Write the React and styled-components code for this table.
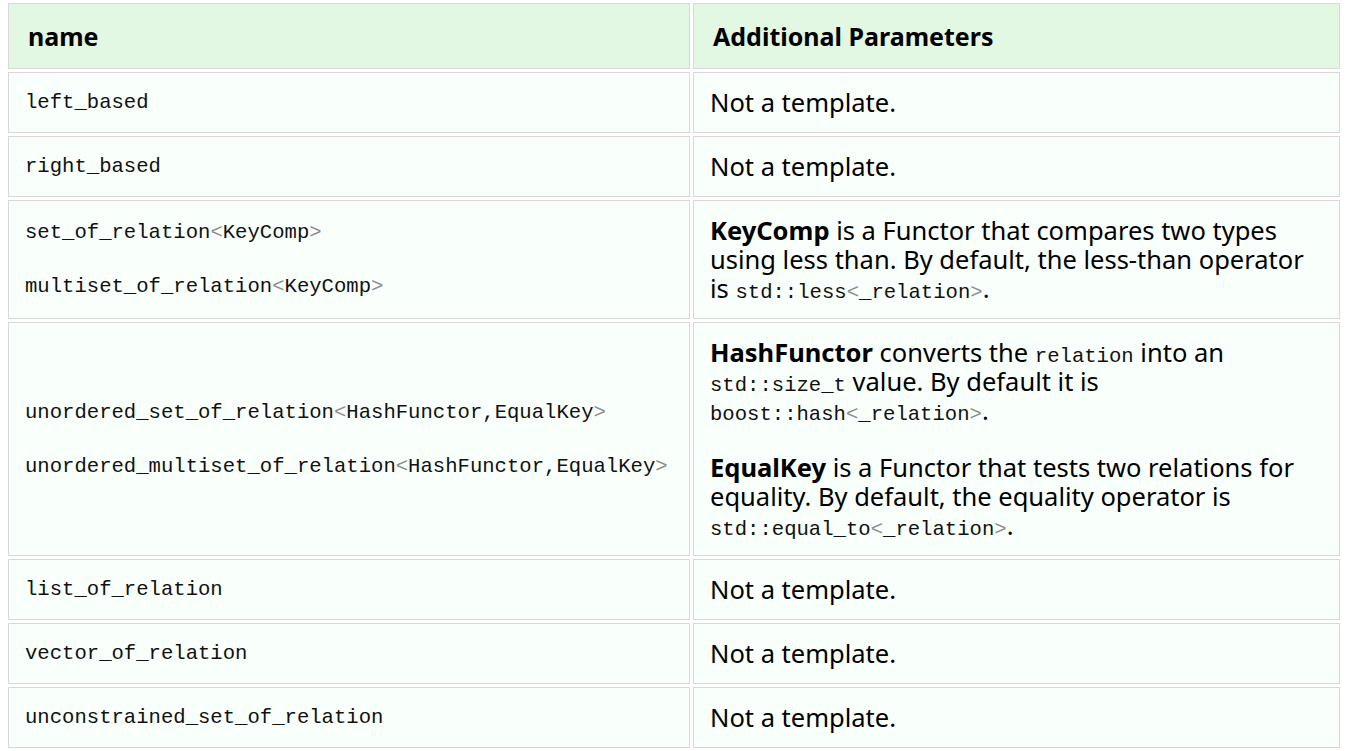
import React from "react";
import styled, { createGlobalStyle } from "styled-components";

const Global = createGlobalStyle`
  html, body { margin: 0; padding: 0; background: #ffffff; }
`;

const Page = styled.div`
  padding: 0 5px;
`;

const Table = styled.table`
  width: 100%;
  table-layout: fixed;
  border-collapse: separate;
  border-spacing: 3px 3px;
  font-family: "Noto Sans", "Open Sans", sans-serif;
  color: #000;
`;

const Th = styled.th`
  background: #e3f8e3;
  border: 1px solid #d8d8d8;
  text-align: left;
  font-weight: 700;
  font-size: 25px;
  line-height: 30px;
  padding: 17px 19px;
`;

const Td = styled.td`
  background: #f9fffb;
  border: 1px solid #d8d8d8;
  vertical-align: middle;
  padding: 15px 16px;
  font-size: 25.5px;
  line-height: 29px;
`;

const Para = styled.p`
  margin: 0;
  & + & { margin-top: 28px; }
`;

const NameLine = styled.p`
  margin: 0;
  font-family: "Liberation Mono", "DejaVu Sans Mono", monospace;
  font-size: 20.6px;
  line-height: 29px;
  color: #111;
  & + & { margin-top: 25px; }
`;

const Code = styled.code`
  font-family: "Liberation Mono", "DejaVu Sans Mono", monospace;
  font-size: 20.6px;
  line-height: 0;
  color: #111;
`;

const Sp = styled.span`
  color: #8c8c8c;
`;

const tpl = (name, args) => (
  <>
    {name}
    <Sp>&lt;</Sp>
    {args}
    <Sp>&gt;</Sp>
  </>
);

const NameBlock = ({ lines }) => (
  <>
    {lines.map((l, i) => (
      <NameLine key={i}>{l}</NameLine>
    ))}
  </>
);

const rows = [
  { names: ["left_based"], params: "Not a template." },
  { names: ["right_based"], params: "Not a template." },
  {
    names: [
      tpl("set_of_relation", "KeyComp"),
      tpl("multiset_of_relation", "KeyComp"),
    ],
    params: (
      <Para>
        <b>KeyComp</b> is a Functor that compares two types using less than. By
        default, the less-than operator is{" "}
        <Code>{tpl("std::less", "_relation")}</Code>.
      </Para>
    ),
  },
  {
    names: [
      tpl("unordered_set_of_relation", "HashFunctor,EqualKey"),
      tpl("unordered_multiset_of_relation", "HashFunctor,EqualKey"),
    ],
    params: (
      <>
        <Para>
          <b>HashFunctor</b> converts the <Code>relation</Code> into an{" "}
          <Code>std::size_t</Code> value. By default it is{" "}
          <Code>{tpl("boost::hash", "_relation")}</Code>.
        </Para>
        <Para>
          <b>EqualKey</b> is a Functor that tests two relations for equality. By
          default, the equality operator is{" "}
          <Code>{tpl("std::equal_to", "_relation")}</Code>.
        </Para>
      </>
    ),
  },
  { names: ["list_of_relation"], params: "Not a template." },
  { names: ["vector_of_relation"], params: "Not a template." },
  { names: ["unconstrained_set_of_relation"], params: "Not a template." },
];

export default function App() {
  return (
    <Page>
      <Global />
      <Table>
        <colgroup>
          <col style={{ width: "682px" }} />
          <col />
        </colgroup>
        <thead>
          <tr>
            <Th>name</Th>
            <Th>Additional Parameters</Th>
          </tr>
        </thead>
        <tbody>
          {rows.map((r, i) => (
            <tr key={i}>
              <Td>
                <NameBlock lines={r.names} />
              </Td>
              <Td>{r.params}</Td>
            </tr>
          ))}
        </tbody>
      </Table>
    </Page>
  );
}
